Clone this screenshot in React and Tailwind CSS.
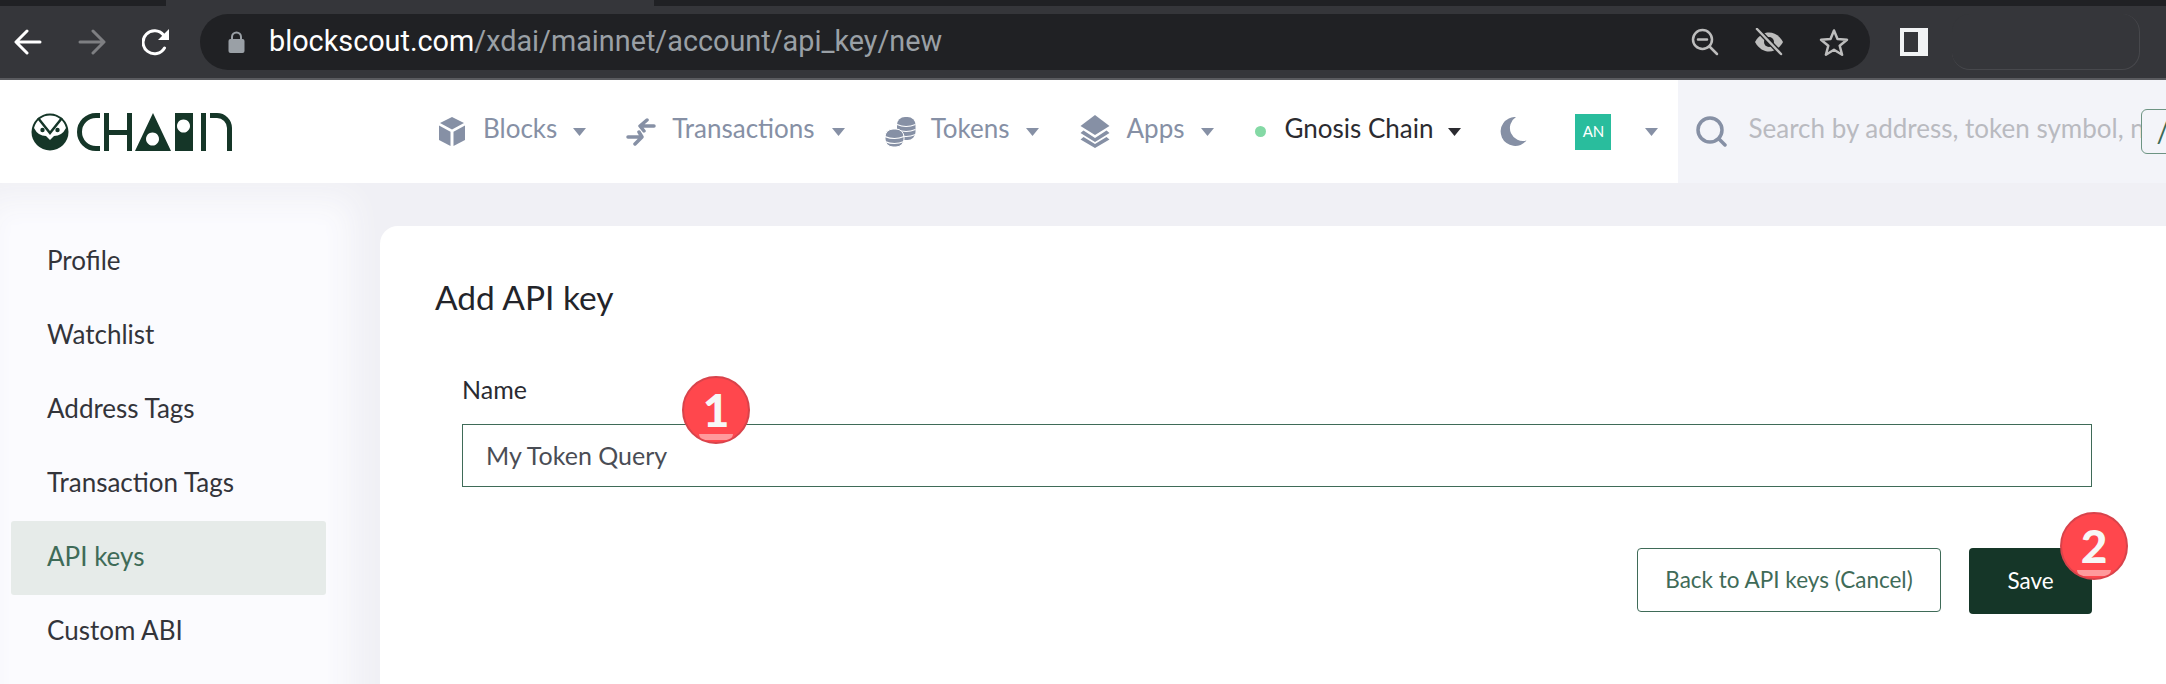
import React from "react";

const navGray = "#8690a5";
const green = "#153628";

function Caret({ color = navGray, className = "" }) {
  return (
    <svg width="13" height="8" viewBox="0 0 13 8" className={className}>
      <path d="M0 0h13L6.500 8z" fill={color} />
    </svg>
  );
}

function BackIcon({ color = "#fff", flip = false }) {
  return (
    <svg width="28" height="26" viewBox="0 0 28 26" className={flip ? "-scale-x-100" : ""} fill="none" stroke={color} strokeWidth="3" strokeLinecap="round" strokeLinejoin="round">
      <path d="M26 13H3M13 2 2 13l11 11" />
    </svg>
  );
}

function ReloadIcon() {
  return (
    <svg width="28" height="28" viewBox="0 0 28 28" fill="none">
      <path d="M22.500 20a11.500 11.500 0 1 1-1-13" stroke="#fff" strokeWidth="3" strokeLinecap="round" />
      <path d="M27 1v11H16z" fill="#fff" />
    </svg>
  );
}

function LockIcon() {
  return (
    <svg width="17" height="22" viewBox="0 0 17 22" fill="none">
      <path d="M4 9V6a4.500 4.500 0 0 1 9 0v3" stroke="#9aa0a6" strokeWidth="2" />
      <rect x="0.500" y="8" width="16" height="14" rx="2" fill="#9aa0a6" />
    </svg>
  );
}

function ZoomOutIcon() {
  return (
    <svg width="28" height="28" viewBox="0 0 28 28" fill="none" stroke="#bdbdbd" strokeWidth="2.500" strokeLinecap="round">
      <circle cx="11.500" cy="11.500" r="9.500" />
      <path d="M7 11.500h9M18.500 18.500l7.500 7.500" />
    </svg>
  );
}

function EyeOffIcon() {
  return (
    <svg width="30" height="28" viewBox="0 0 30 28" fill="none">
      <path d="M1 14C5 7 10 4.500 15 4.500S25 7 29 14c-4 7-9 9.500-14 9.500S5 21 1 14z" fill="#bdbdbd" />
      <circle cx="15" cy="14" r="5" fill="#202124" />
      <path d="M3 1l24 25" stroke="#202124" strokeWidth="5" />
      <path d="M3 1l24 25" stroke="#bdbdbd" strokeWidth="2.500" strokeLinecap="round" />
    </svg>
  );
}

function StarIcon() {
  return (
    <svg width="30" height="29" viewBox="0 0 30 29" fill="none" stroke="#bdbdbd" strokeWidth="2.500" strokeLinejoin="round">
      <path d="M15 2.500l3.500 8.500 9.500.7-7.300 6 2.400 9-8.100-4.900-8.100 4.900 2.400-9-7.300-6 9.500-.7z" />
    </svg>
  );
}

function CubeIcon() {
  return (
    <svg width="26" height="29" viewBox="0 0 26 29" fill={navGray}>
      <path d="M13 0l12 6-12 6.500L1 6z" />
      <path d="M0 8.500l11.500 6.300V29L0 23z" />
      <path d="M26 8.500l-11.500 6.300V29L26 23z" />
    </svg>
  );
}

function ArrowsIcon() {
  return (
    <svg width="30" height="28" viewBox="0 0 30 28" fill="none" stroke={navGray} strokeWidth="3.500" strokeLinecap="round" strokeLinejoin="round">
      <path d="M28 8H15M21 2l-7 6 4 5" />
      <path d="M2 19h13M9 26l7-7-3-5" />
    </svg>
  );
}

function CoinsIcon() {
  return (
    <svg width="31" height="30" viewBox="0 0 31 30" fill={navGray}>
      <rect x="12" y="0" width="18.500" height="23" rx="8" />
      <path d="M12 7.500q9 4 18.500 0M12 12.500q9 4 18.500 0M12 17.500q9 4 18.500 0" fill="none" stroke="#fff" strokeWidth="1.200" />
      <rect x="0" y="12" width="19" height="18" rx="8" stroke="#fff" strokeWidth="1" />
      <path d="M0 19.500q9.500 4 19 0M0 24.500q9.500 4 19 0" fill="none" stroke="#fff" strokeWidth="1.200" />
    </svg>
  );
}

function LayersIcon() {
  return (
    <svg width="30" height="33" viewBox="0 0 30 33" fill={navGray}>
      <path d="M15 0l14.500 11L15 20 .5 11z" />
      <path d="M3.500 15.500L15 23l11.500-7.500 3 2.500L15 27 .5 18z" />
      <path d="M3.500 22L15 29l11.500-7 3 2.500L15 33 .5 24.500z" />
    </svg>
  );
}

function MoonIcon() {
  return (
    <svg width="28" height="29" viewBox="0 0 28 29" fill={navGray}>
      <path d="M17 0A14.500 14.500 0 1 0 27.500 23.500 13 13 0 0 1 17 0z" />
    </svg>
  );
}

function SearchIcon() {
  return (
    <svg width="31" height="31" viewBox="0 0 31 31" className="shrink-0" fill="none" stroke={navGray} strokeWidth="3.500" strokeLinecap="round">
      <circle cx="14" cy="14" r="12" />
      <path d="M23 23l6 6" />
    </svg>
  );
}

function Logo() {
  return (
    <svg width="205" height="42" viewBox="30 110 205 42" fill={green}>
      <circle cx="50" cy="131" r="18.500" />
      <path d="M34 127A16.500 16.500 0 0 1 66 127Q62 135 54 135L50 139L46 135Q38 135 34 127z" fill="#fff" />
      <path d="M38 117L50 132L62 117" fill="none" stroke={green} strokeWidth="2.500" />
      <circle cx="42.500" cy="129" r="2.200" />
      <circle cx="57.500" cy="129" r="2.200" />
      <path d="M100 114.500h-4a16.500 16.500 0 0 0 0 33h4" fill="none" stroke={green} strokeWidth="5" />
      <path d="M104 112h5v17h18v-17h5v38h-5v-16h-18v16h-5z" />
      <path fillRule="evenodd" d="M153 112l18 38h-36zM152.500 131.500a6.500 6.500 0 1 0 .01 0z" />
      <path fillRule="evenodd" d="M175 112h18v38h-18zM183.500 118.500a6.500 6.500 0 1 0 .01 0z" />
      <path d="M201 112h5v38h-5z" />
      <path d="M210 112h7a15 15 0 0 1 15 15v23h-5v-23a10 10 0 0 0-10-10h-7z" />
    </svg>
  );
}

function NavItem({ icon, label, gap, caretGap, className = "" }) {
  return (
    <div className={`flex items-center ${className}`}>
      {icon}
      <span className={`pb-[6px] text-[26px] text-[#8690a5] ${gap}`}>{label}</span>
      <Caret className={caretGap} />
    </div>
  );
}

const sideItems = ["Profile", "Watchlist", "Address Tags", "Transaction Tags", "API keys", "Custom ABI"];

export default function App() {
  return (
    <div className="h-[684px] w-[2166px] overflow-hidden bg-[#f0f0f5] font-['Lato',sans-serif]">
      {/* browser chrome */}
      <div className="flex h-[6px] bg-[#202124]">
        <div className="ml-[166px] h-full w-[488px] bg-[#35363a]" />
      </div>
      <div className="flex h-[74px] items-center border-b-2 border-[#5a5b5f] bg-[#35363a] font-['Roboto',sans-serif]">
        <div className="ml-[14px] flex w-[186px] items-center">
          <BackIcon />
          <div className="ml-[36px]">
            <BackIcon color="#7e7f82" flip />
          </div>
          <div className="ml-[36px]">
            <ReloadIcon />
          </div>
        </div>
        <div className="flex h-[56px] w-[1670px] items-center rounded-full bg-[#202124]">
          <div className="ml-[28px]">
            <LockIcon />
          </div>
          <span className="ml-[24px] text-[28.8px] text-white">
            blockscout.com<span className="text-[#9aa0a6]">/xdai/mainnet/account/api_key/new</span>
          </span>
          <div className="ml-auto flex items-center gap-[35px] pr-[21px]">
            <ZoomOutIcon />
            <EyeOffIcon />
            <StarIcon />
          </div>
        </div>
        <div className="ml-[30px] flex h-[28px] w-[28px] bg-[#f1f3f4] py-[4px] pl-[4px]">
          <div className="h-full w-[14px] bg-[#35363a]" />
        </div>
        <div className="ml-[24px] h-[56px] w-[188px] rounded-[18px] border-r border-b border-[#47484c] bg-[#35363a]" />
      </div>

      {/* header */}
      <header className="flex h-[103px] items-center bg-white">
        <div className="ml-[30px] w-[409px]">
          <Logo />
        </div>
        <NavItem icon={<CubeIcon />} label="Blocks" gap="ml-[18px]" caretGap="ml-[16px]" />
        <NavItem className="ml-[40px]" icon={<ArrowsIcon />} label="Transactions" gap="ml-[16px]" caretGap="ml-[17px]" />
        <NavItem className="ml-[40px]" icon={<CoinsIcon />} label="Tokens" gap="ml-[15px]" caretGap="ml-[16px]" />
        <NavItem className="ml-[41px]" icon={<LayersIcon />} label="Apps" gap="ml-[17px]" caretGap="ml-[17px]" />
        <span className="ml-[41px] h-[11px] w-[11px] rounded-full bg-[#84d9a5]" />
        <span className="ml-[18px] pb-[6px] text-[26px] text-[#2b2b30]">Gnosis Chain</span>
        <Caret color="#2b2b30" className="ml-[15px]" />
        <div className="ml-[38px]">
          <MoonIcon />
        </div>
        <div className="ml-[48px] flex h-[36px] w-[36px] items-center justify-center bg-[#29bd9d] text-[15px] text-white">
          AN
        </div>
        <Caret className="ml-[34px]" />
        <div className="ml-[20px] flex h-full min-w-0 flex-1 items-center bg-[#f3f4f9] pl-[18px]">
          <SearchIcon />
          <span className="ml-[21px] w-[393px] shrink-0 overflow-hidden pb-[6px] text-[26px] whitespace-nowrap text-[#b9bac0]">
            Search by address, token symbol, name
          </span>
          <div className="h-[45px] w-[60px] shrink-0 rounded-[6px] border border-[#6d9483] pl-[14px] text-[28px] leading-[42px] text-[#3c6a56]">
            /
          </div>
        </div>
      </header>

      {/* page */}
      <div className="flex pt-[43px]">
        <aside className="-mt-px ml-[11px] w-[315px] shrink-0 bg-[#fbfbfe] shadow-[0_0_30px_25px_#fbfbfe]">
          {sideItems.map((item) => (
            <div
              key={item}
              className={`flex h-[74px] items-center rounded-[3px] pb-[3px] pl-[36px] text-[26px] ${
                item === "API keys" ? "bg-[#e6ebe9] text-[#3f6b58]" : "text-[#33343a]"
              }`}
            >
              {item}
            </div>
          ))}
        </aside>
        <main className="relative z-10 ml-[54px] h-[500px] flex-1 rounded-tl-[18px] bg-white pt-[49px] pr-[74px] pl-[55px]">
          <h1 className="text-[33.5px] leading-[44px] text-[#23242a]">Add API key</h1>
          <label className="mt-[52px] ml-[27px] block text-[25px] leading-[36px] text-[#2a2b31]">Name</label>
          <div className="relative mt-[17px] ml-[27px]">
            <div className="flex h-[63px] items-center border border-[#3f6b58] pl-[23px] text-[25px] text-[#4a4d55]">
              My Token Query
            </div>
            <Badge n="1" className="top-[-48px] left-[220px]" />
          </div>
          <div className="mt-[61px] flex justify-end gap-[28px]">
            <button type="button" className="h-[64px] w-[304px] rounded-[4px] border border-[#3f6b58] text-[22.5px] text-[#3f6b58]">
              Back to API keys (Cancel)
            </button>
            <div className="relative">
              <button type="button" className="h-[66px] w-[123px] rounded-[4px] bg-[#153628] text-[22.5px] text-white">
                Save
              </button>
              <Badge n="2" className="top-[-36px] left-[91px]" />
            </div>
          </div>
        </main>
      </div>
    </div>
  );
}

function Badge({ n, className }) {
  return (
    <div className={`absolute flex h-[68px] w-[68px] items-center justify-center overflow-hidden rounded-full border-2 border-[#d8434b] bg-[#ff474d] text-[46px] leading-none font-black text-[#f7f7f7] ${className}`}>
      {n}
      <div className="absolute bottom-[2px] left-[15px] h-[6px] w-[34px] rounded-b-full bg-[#ff9a9c]" />
    </div>
  );
}
